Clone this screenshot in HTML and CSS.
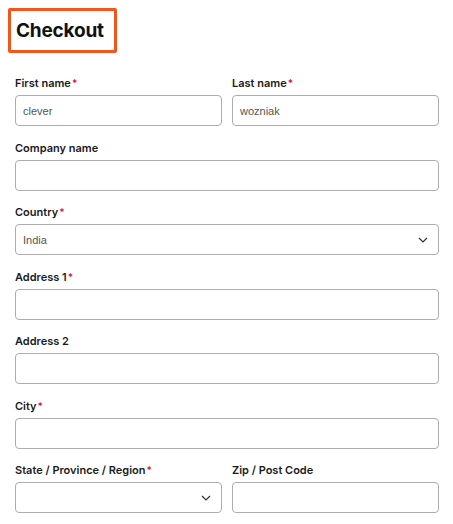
FILE: index.html
```html
<!DOCTYPE html>
<html>
<head>
<meta charset="utf-8">
<link rel="stylesheet" href="styles.css">
</head>
<body>
<div class="title-box"><h1 class="title">Checkout</h1></div>
<form class="form">
  <div class="row two">
    <div class="field">
      <label class="label">First name<span class="req">*</span></label>
      <div class="input"><span class="value">clever</span></div>
    </div>
    <div class="field">
      <label class="label">Last name<span class="req">*</span></label>
      <div class="input"><span class="value">wozniak</span></div>
    </div>
  </div>
  <div class="row">
    <div class="field">
      <label class="label">Company name</label>
      <div class="input"></div>
    </div>
  </div>
  <div class="row">
    <div class="field">
      <label class="label">Country<span class="req">*</span></label>
      <div class="input select"><span class="value">India</span>
        <svg class="chev" width="10" height="6" viewBox="0 0 10 6"><path d="M1 1l4 4 4-4" fill="none" stroke="#333" stroke-width="1.2"/></svg>
      </div>
    </div>
  </div>
  <div class="row">
    <div class="field">
      <label class="label">Address 1<span class="req">*</span></label>
      <div class="input"></div>
    </div>
  </div>
  <div class="row">
    <div class="field">
      <label class="label">Address 2</label>
      <div class="input"></div>
    </div>
  </div>
  <div class="row">
    <div class="field">
      <label class="label">City<span class="req">*</span></label>
      <div class="input"></div>
    </div>
  </div>
  <div class="row two">
    <div class="field">
      <label class="label">State / Province / Region<span class="req">*</span></label>
      <div class="input select"><span class="value"></span>
        <svg class="chev" width="10" height="6" viewBox="0 0 10 6"><path d="M1 1l4 4 4-4" fill="none" stroke="#333" stroke-width="1.2"/></svg>
      </div>
    </div>
    <div class="field">
      <label class="label">Zip / Post Code</label>
      <div class="input"></div>
    </div>
  </div>
</form>
</body>
</html>
```
FILE: styles.css
```css
html, body { background: #fff; }
body {
  margin: 8px;
  font-family: Inter, "Liberation Sans", sans-serif;
  color: #1a1a1a;
}
.title-box {
  display: inline-block;
  border: 3px solid #f2561d;
  border-radius: 2px;
  padding: 0 10px 0 5px;
  height: 39px;
  box-sizing: content-box;
}
.title {
  margin: 0;
  font-size: 19px;
  font-weight: 700;
  line-height: 39px;
  letter-spacing: -0.2px;
  color: #111;
}
.form {
  margin-top: 23px;
  padding-left: 7px;
  padding-right: 6px;
  display: flex;
  flex-direction: column;
  gap: 14.5px;
}
.row.two {
  display: grid;
  grid-template-columns: 1fr 1fr;
  column-gap: 10px;
}
.field { display: flex; flex-direction: column; }
.label {
  font-size: 11px;
  font-weight: 600;
  line-height: 14px;
  margin-bottom: 5px;
  color: #1a1a1a;
}
.req { color: #d4173e; margin-left: 1px; font-size: 10px; }
.input {
  height: 31px;
  box-sizing: border-box;
  border: 1px solid #adadad;
  border-radius: 4px;
  display: flex;
  align-items: center;
  padding: 0 10px 0 7px;
}
.value {
  font-family: "Liberation Sans", Arial, sans-serif;
  font-size: 11px;
  color: #555;
  flex: 1;
}
.chev { flex: none; }
```
